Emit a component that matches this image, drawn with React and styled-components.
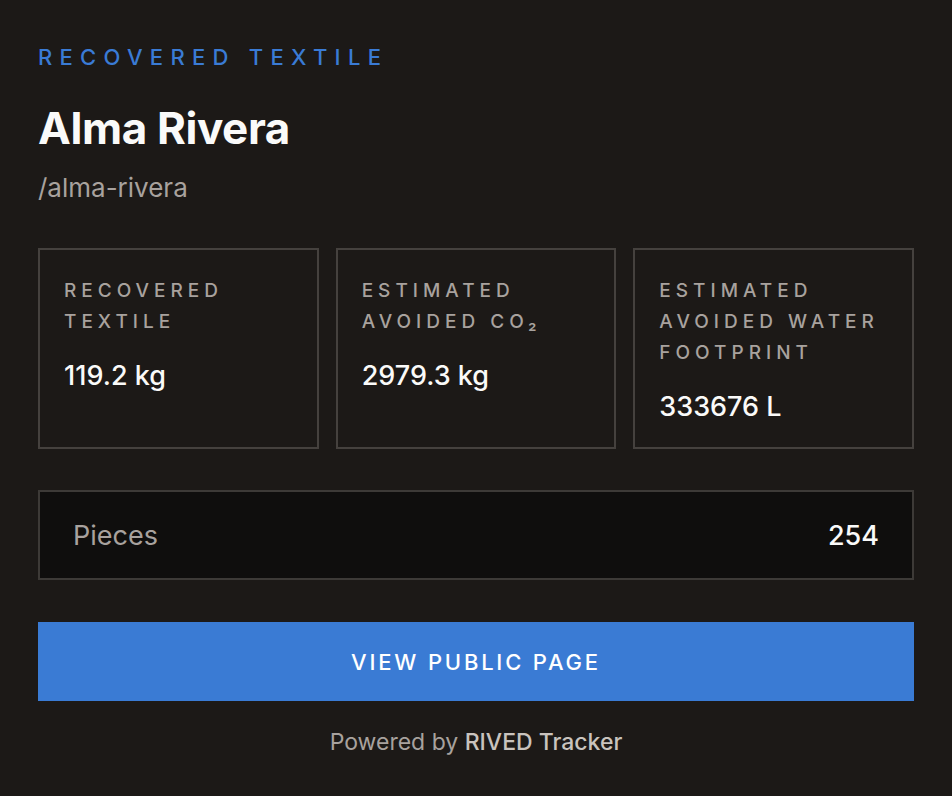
import React from 'react';
import styled, { createGlobalStyle } from 'styled-components';

const GlobalStyle = createGlobalStyle`
  html, body {
    margin: 0;
    padding: 0;
    background: #1c1917;
  }
  body {
    font-family: Inter, "Noto Sans", "Liberation Sans", sans-serif;
    -webkit-font-smoothing: antialiased;
  }
`;

const Page = styled.main`
  width: 952px;
  min-height: 796px;
  box-sizing: border-box;
  padding: 44px 38px 40px;
  background: #1c1917;
  color: #fafaf9;
`;

const Eyebrow = styled.div`
  font-size: 22px;
  line-height: 26px;
  letter-spacing: 7.3px;
  color: #3a7bd5;
  font-weight: 500;
`;

const Name = styled.h1`
  margin: 33px 0 0;
  font-size: 44px;
  line-height: 50px;
  font-weight: 700;
  letter-spacing: -0.4px;
  color: #fafaf9;
`;

const Slug = styled.div`
  margin-top: 19px;
  font-size: 26px;
  line-height: 32px;
  color: #a8a29e;
`;

const Stats = styled.div`
  margin-top: 44px;
  display: grid;
  grid-template-columns: repeat(3, 1fr);
  gap: 17px;
`;

const Card = styled.div`
  height: 201px;
  box-sizing: border-box;
  border: 2px solid #45413e;
  padding: 25px 24px;
`;

const Label = styled.div`
  font-size: 19px;
  line-height: 31px;
  letter-spacing: 5px;
  color: #a8a29e;
  font-weight: 500;
  text-transform: uppercase;
`;

const Value = styled.div`
  margin-top: 23px;
  font-size: 27px;
  line-height: 32px;
  font-weight: 500;
  color: #fafaf9;
`;

const PiecesRow = styled.div`
  margin-top: 41px;
  height: 90px;
  box-sizing: border-box;
  border: 2px solid #3d3a37;
  background: #0f0e0d;
  display: flex;
  align-items: center;
  justify-content: space-between;
  padding: 0 33px;
`;

const PiecesLabel = styled.span`
  font-size: 27px;
  color: #a8a29e;
`;

const PiecesValue = styled.span`
  font-size: 27px;
  font-weight: 500;
  color: #fafaf9;
`;

const Button = styled.button`
  margin-top: 42px;
  width: 100%;
  height: 79px;
  border: none;
  background: #3a7bd4;
  color: #fff;
  font-family: inherit;
  font-size: 22px;
  font-weight: 500;
  letter-spacing: 2.8px;
  cursor: pointer;
`;

const Footer = styled.div`
  margin-top: 26px;
  text-align: center;
  font-size: 23px;
  line-height: 30px;
  color: #a8a29e;
`;

const Brand = styled.span`
  font-weight: 500;
  color: #c9c3be;
`;

const stats = [
  { label: 'Recovered textile', value: '119.2 kg' },
  { label: 'Estimated avoided CO₂', value: '2979.3 kg' },
  { label: 'Estimated avoided water footprint', value: '333676 L' },
];

export default function App() {
  return (
    <>
      <GlobalStyle />
      <Page>
        <Eyebrow>RECOVERED TEXTILE</Eyebrow>
        <Name>Alma Rivera</Name>
        <Slug>/alma-rivera</Slug>
        <Stats>
          {stats.map(s => (
            <Card key={s.label}>
              <Label>{s.label}</Label>
              <Value>{s.value}</Value>
            </Card>
          ))}
        </Stats>
        <PiecesRow>
          <PiecesLabel>Pieces</PiecesLabel>
          <PiecesValue>254</PiecesValue>
        </PiecesRow>
        <Button>VIEW PUBLIC PAGE</Button>
        <Footer>
          Powered by <Brand>RIVED Tracker</Brand>
        </Footer>
      </Page>
    </>
  );
}
